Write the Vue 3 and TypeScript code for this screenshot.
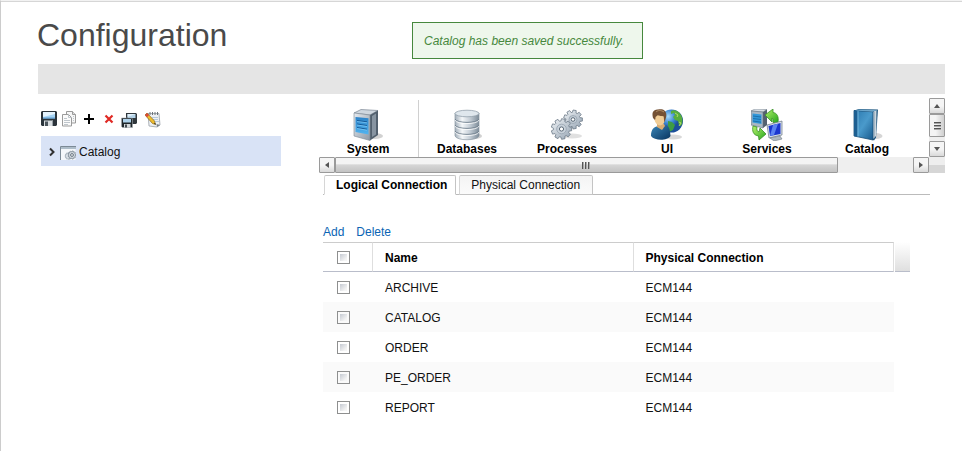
<script setup lang="ts">
import { computed, ref } from 'vue'

interface Connection {
  name: string
  physical: string
  checked: boolean
}

const sections = ['System', 'Databases', 'Processes', 'UI', 'Services', 'Catalog']
const tabs = ['Logical Connection', 'Physical Connection']
const activeTab = ref(tabs[0])

const rows = ref<Connection[]>(
  ['ARCHIVE', 'CATALOG', 'ORDER', 'PE_ORDER', 'REPORT'].map((name) => ({
    name,
    physical: 'ECM144',
    checked: false,
  })),
)

const allChecked = computed({
  get: () => rows.value.length > 0 && rows.value.every((row) => row.checked),
  set: (value: boolean) => rows.value.forEach((row) => (row.checked = value)),
})

// Nine-toothed gear outline around a centre point
function gear(cx: number, cy: number, outer: number, inner: number): string {
  const points: string[] = []
  const teeth = 9
  for (let i = 0; i < teeth; i++) {
    const base = (i / teeth) * Math.PI * 2
    const steps: [number, number][] = [
      [-0.2, inner],
      [-0.13, outer],
      [0.13, outer],
      [0.2, inner],
    ]
    for (const [offset, radius] of steps) {
      const angle = base + offset * 1.3
      points.push(`${(cx + Math.cos(angle) * radius).toFixed(2)},${(cy + Math.sin(angle) * radius).toFixed(2)}`)
    }
  }
  return points.join(' ')
}
</script>

<template>
  <div class="page">
    <header class="head">
      <h1>Configuration</h1>
      <p class="notice" role="status">Catalog has been saved successfully.</p>
    </header>
    <div class="band"></div>

    <div class="body">
      <aside class="side">
        <div class="tools">
          <button type="button" aria-label="Save">
            <svg width="16" height="18" viewBox="0 0 16 18">
              <path d="M1 1h14l1 1v13l-1 1H1l-1-1V2z" fill="#2b343b" />
              <path d="M2 2h12v6.500H2z" fill="#a5d4f5" />
              <path d="M2 2h12v2L2 7z" fill="#e4f4ff" />
              <path d="M2 7.500h12v1H2z" fill="#5c9fd4" />
              <path d="M3 10.500h9V16H3z" fill="#d9dee1" />
              <path d="M4 11.500h3V16H4z" fill="#4b555c" />
              <path d="M11 10.500h1V16h-1z" fill="#98a1a7" />
            </svg>
          </button>
          <button type="button" aria-label="Copy">
            <svg width="16" height="18" viewBox="0 0 16 18" stroke="#9b9b9b">
              <path d="M5.500 1.500h6l3 3v8.500h-9z" fill="#f6f6f6" />
              <path d="M11.500 1.500v3h3" fill="#ddd" />
              <path d="M1.500 4.500h6l3 3v8.500h-9z" fill="#fbfbfb" />
              <path d="M7.500 4.500v3h3M3 8.500h3M3 10.500h6M3 12.500h6M3 14.500h4M12 6.500h1M12 8.500h1M12 10.500h1" fill="none" stroke="#bfc6cc" />
            </svg>
          </button>
          <button type="button" aria-label="Add item">
            <svg width="16" height="18" viewBox="0 0 16 18"><path d="M7 4h2v4h4v2H9v4H7v-4H3V8h4z" fill="#000" /></svg>
          </button>
          <button type="button" aria-label="Remove item">
            <svg width="16" height="18" viewBox="0 0 16 18"><path d="M4.500 5.500l7 7M11.500 5.500l-7 7" stroke="#e02a24" stroke-width="2.200" /></svg>
          </button>
          <button type="button" aria-label="Save all">
            <svg width="16" height="18" viewBox="0 0 16 18">
              <path d="M5 3h10l1 1v9l-1 1H5z" fill="#30373c" />
              <path d="M6.500 4h8v4h-8z" fill="#b4d3e8" />
              <path d="M6.500 4h8L6.500 7z" fill="#e1f0fa" />
              <path d="M0.500 8h10l1 1v8.500H1.500l-1-1z" fill="#20272b" stroke="#a5adb2" stroke-width=".6" />
              <path d="M2 9h8v3.500H2z" fill="#aed2eb" />
              <path d="M3 14h6.500v3.500H3z" fill="#d5d9dc" />
              <path d="M4 14.500h2v3H4z" fill="#444c52" />
            </svg>
          </button>
          <button type="button" aria-label="Edit" class="edit">
            <svg width="16" height="18" viewBox="0 0 16 18">
              <path d="M3 3.500h11l1 11.500-3 2-8-1z" fill="#edf0f3" stroke="#99a1a8" stroke-width=".8" />
              <path d="M12 17l-.5-3 3.500 1z" fill="#788087" />
              <path d="M5 2v3M7.500 2v3M10 2v3M12.500 2v3" stroke="#6d747a" />
              <path d="M7 7.500h6M8 9.500h5M10 11.500h4" stroke="#b6c9db" />
              <path d="M2 3l7.500 8 1 3.500-3-1L0 5z" fill="#efbd2d" stroke="#84631b" stroke-width=".7" />
              <path d="M2 3L0 5l2 2.300 2-2.100z" fill="#dc4a3a" />
              <path d="M9 13.500l1.700 1.200-.5-2z" fill="#222" />
            </svg>
          </button>
        </div>
        <div class="tree" role="tree">
          <a href="#catalog" class="node" role="treeitem" aria-expanded="false">
            <svg class="arrow" width="8" height="10" viewBox="0 0 8 10"><path d="M2 1.500L5.500 5 2 8.500" fill="none" stroke="#303030" stroke-width="2" /></svg>
            <svg width="16" height="16" viewBox="0 0 16 16">
              <path d="M.5 2.500h15V16H.5z" fill="#f4f7fa" />
              <path d="M.5 16V2.500H16" fill="none" stroke="#7c8a96" />
              <path d="M1 3h15v2H1z" fill="#aebdc9" />
              <polygon :points="gear(8.5, 12, 3.4, 2.6)" fill="#dfe5ea" stroke="#97a3ae" stroke-width=".8" />
              <polygon :points="gear(12, 11, 4, 3.2)" fill="#d2d9df" stroke="#75828e" stroke-width=".8" />
              <circle cx="12" cy="11" r="1.400" fill="#fff" stroke="#65727e" />
            </svg>
            <span>Catalog</span>
          </a>
        </div>
      </aside>

      <main class="main">
        <div class="scroller">
          <nav class="strip" aria-label="Sections">
            <a v-for="section in sections" :key="section" :href="'#' + section.toLowerCase()" class="cell">
              <svg v-if="section === 'System'" width="32" height="32" viewBox="0 0 32 32">
                <defs>
                  <linearGradient id="steel" x2="1" y2="1"><stop stop-color="#e6ebf0" /><stop offset="1" stop-color="#8c98a5" /></linearGradient>
                  <linearGradient id="screen" x2="0" y2="1"><stop stop-color="#2b82c8" /><stop offset="1" stop-color="#51b4f0" /></linearGradient>
                </defs>
                <ellipse cx="23" cy="27" rx="8" ry="3" fill="#000" opacity=".18" />
                <path d="M2 4L9 .5l17 1L18 6z" fill="#cfd7df" stroke="#7b8794" stroke-width=".7" />
                <path d="M18 6l8-4.500V26l-8 5.500z" fill="#52606e" />
                <path d="M20 7l4-2.500v21L20 28z" fill="#8794a1" />
                <path d="M2 4l16 2v25.500L2 27z" fill="url(#steel)" stroke="#7a8692" stroke-width=".6" />
                <path d="M3.500 8l13 1.300V25.500l-13-2.500z" fill="url(#screen)" />
                <path d="M5 11.500l10 1.300M5 15l10 1.500M5 18.500l10 1.700" stroke="#155a98" />
                <path d="M5 12.500l10 1.300M5 16l10 1.500M5 19.500l10 1.700" stroke="#8bd3fb" stroke-width=".6" />
              </svg>
              <svg v-else-if="section === 'Databases'" width="32" height="32" viewBox="0 0 32 32">
                <defs><linearGradient id="drum"><stop stop-color="#a3afba" /><stop offset=".3" stop-color="#f4f7f9" /><stop offset=".6" stop-color="#c8d1d9" /><stop offset="1" stop-color="#7d8c99" /></linearGradient></defs>
                <ellipse cx="24" cy="27" rx="7" ry="3" fill="#000" opacity=".18" />
                <path d="M4 4v23c2 5 22 5 24 0V4z" fill="url(#drum)" stroke="#8b98a3" stroke-width=".7" />
                <path d="M4 10c2 4.500 22 4.500 24 0M4 16c2 4.500 22 4.500 24 0M4 22c2 4.500 22 4.500 24 0" fill="none" stroke="#70808d" stroke-width=".9" />
                <path d="M4 11.200c2 4.500 22 4.500 24 0M4 17.200c2 4.500 22 4.500 24 0M4 23.200c2 4.500 22 4.500 24 0" fill="none" stroke="#fff" stroke-width=".8" />
                <ellipse cx="16" cy="4.500" rx="12" ry="3.300" fill="#dfe7ed" stroke="#93a1ac" stroke-width=".8" />
              </svg>
              <svg v-else-if="section === 'Processes'" width="32" height="32" viewBox="0 0 32 32">
                <defs><linearGradient id="cog" x2="1" y2="1"><stop stop-color="#f0f3f6" /><stop offset="1" stop-color="#95a4b3" /></linearGradient></defs>
                <ellipse cx="21" cy="27" rx="10" ry="2.500" fill="#000" opacity=".12" />
                <polygon :points="gear(22, 10.5, 9.5, 7.2)" fill="url(#cog)" stroke="#6b7987" stroke-width=".8" />
                <circle cx="22" cy="10.500" r="4" fill="#c3cdd6" stroke="#95a2ae" stroke-width=".8" />
                <circle cx="22" cy="10.500" r="1.800" fill="#fff" stroke="#5b6977" />
                <polygon :points="gear(10.5, 20, 10.3, 8)" fill="url(#cog)" stroke="#6b7987" stroke-width=".8" />
                <circle cx="10.500" cy="20" r="4.800" fill="#c8d1da" stroke="#95a2ae" stroke-width=".8" />
                <circle cx="10.500" cy="20" r="2.100" fill="#fff" stroke="#5b6977" />
              </svg>
              <svg v-else-if="section === 'UI'" width="32" height="32" viewBox="0 0 32 32">
                <defs>
                  <radialGradient id="ocean" cx=".35" cy=".3"><stop stop-color="#a9dcfa" /><stop offset=".6" stop-color="#3b86d3" /><stop offset="1" stop-color="#1b4f9a" /></radialGradient>
                  <linearGradient id="shirt" x2="1" y2="1"><stop stop-color="#3a86b8" /><stop offset="1" stop-color="#08345f" /></linearGradient>
                </defs>
                <ellipse cx="22" cy="28" rx="9" ry="2.500" fill="#000" opacity=".15" />
                <circle cx="20.500" cy="12" r="11.500" fill="url(#ocean)" />
                <path d="M20 2c3-2 8 0 10 4 2 3 2 8 0 11l-2-1-1-4-3-1-2-3 2-2-1-2-3 1z" fill="#57ad3e" />
                <path d="M17 12l4 1 3 3-2 5-4 2-1-5z" fill="#3e9c43" />
                <path d="M24 4l3 2-1 2M28 13l2 1-2 3" fill="none" stroke="#b0d96a" />
                <path d="M0 27c0-7 3-9 7-10l5 3 3-4c3 1 4 4 4.500 11-3 5-16 5-19.500 0z" fill="url(#shirt)" />
                <path d="M6 14l7 1 1 2-3 4-5-3z" fill="#d9ac72" />
                <path d="M3 5c0-5 11-5 11 1l-.5 6c-.7 6-8.500 6-10-1z" fill="#f1cd96" />
                <path d="M2 9C0 2 4 .5 7 .5c6-1 9.500 2 8 8l-1.500 5-1-6-6-1L4 11z" fill="#755134" />
                <path d="M4.500 8l2-1.500 6 1L12 13c-1.500 4-6 3.500-7.500-1z" fill="#f1cd96" />
                <path d="M5 3c2-2 5-2 8 0" fill="none" stroke="#b39068" />
              </svg>
              <svg v-else-if="section === 'Services'" width="32" height="32" viewBox="0 0 32 32">
                <defs><linearGradient id="lime" x2="1" y2="1"><stop stop-color="#b7f36d" /><stop offset="1" stop-color="#25a51c" /></linearGradient></defs>
                <path d="M0 2l4-2 12 .5L12 3z" fill="#d6dde3" stroke="#7d8995" stroke-width=".6" />
                <path d="M12 3l4-2.500V16l-4 3z" fill="#536170" />
                <path d="M0 2l12 1v16L0 16z" fill="#a9b7c3" stroke="#657382" stroke-width=".6" />
                <path d="M1.500 4.500l9 1V15l-9-1.500z" fill="#3298da" />
                <path d="M2 7l8 1M2 9.500l8 1M2 12l8 1.200" stroke="#116099" stroke-width=".7" />
                <path d="M14 6l8-6v3.500c4 .5 6 4 5 10h-5c0-3 0-4-1-4.500V13z" fill="url(#lime)" stroke="#389127" stroke-width=".8" />
                <path d="M2 17l4 1c-.5 3 0 4 2 5l1-4 6 6-7 6-.5-4C2 26 1 22 2 17z" fill="url(#lime)" stroke="#389127" stroke-width=".8" />
                <path d="M16 16l15-4v14l-13 3z" fill="#d8dfe6" stroke="#687684" stroke-width=".7" />
                <path d="M17.500 17l12-3v11l-10.500 2z" fill="#1b36cf" />
                <path d="M22 16l5-1.200L23 26l-4 .7z" fill="#5b82f2" />
                <path d="M19 29l10-2 2 3-8 2z" fill="#aeb8c1" stroke="#6f7b86" stroke-width=".6" />
              </svg>
              <svg v-else width="32" height="32" viewBox="0 0 32 32">
                <defs><linearGradient id="cover" x2="1" y2="1"><stop stop-color="#2a78ae" /><stop offset=".5" stop-color="#4a9acb" /><stop offset="1" stop-color="#17598c" /></linearGradient></defs>
                <ellipse cx="25" cy="27" rx="6.500" ry="3" fill="#000" opacity=".16" />
                <path d="M3 1.500L8 0l19 .5-2 28-2 3-2-1z" fill="#20577f" />
                <path d="M22 3l3.500-2-.5 26-3 3z" fill="#c9d6df" />
                <path d="M23.500 3v25" stroke="#8598a6" stroke-width=".5" />
                <path d="M3 1.500l19 1.300V31L3 27z" fill="url(#cover)" stroke="#174d75" stroke-width=".8" />
                <path d="M3 1.500l3.500.3v26L3 27z" fill="#1d5f91" />
                <path d="M7 2v25.500" stroke="#82c0e2" stroke-width=".8" />
                <path d="M4 1.500L8 .5l18 .6-4.500 1.700z" fill="#6ca5c9" />
              </svg>
              <span>{{ section }}</span>
            </a>
          </nav>
          <div class="vbar">
            <button type="button" aria-label="Scroll up"><svg width="6" height="6" viewBox="0 0 6 6"><path d="M3 1l3 4H0z" fill="#555" /></svg></button>
            <div class="vthumb"><i></i><i></i><i></i></div>
            <button type="button" aria-label="Scroll down" class="last"><svg width="6" height="6" viewBox="0 0 6 6"><path d="M3 5l3-4H0z" fill="#555" /></svg></button>
          </div>
          <div class="hbar">
            <button type="button" aria-label="Scroll left"><svg width="6" height="6" viewBox="0 0 6 6"><path d="M1 3l4-3v6z" fill="#555" /></svg></button>
            <div class="htrack"><div class="hthumb"><i></i><i></i><i></i></div></div>
            <button type="button" aria-label="Scroll right"><svg width="6" height="6" viewBox="0 0 6 6"><path d="M5 3L1 0v6z" fill="#555" /></svg></button>
          </div>
          <div class="corner"></div>
        </div>

        <div class="tabs" role="tablist">
          <button
            v-for="tab in tabs"
            :key="tab"
            type="button"
            role="tab"
            class="tab"
            :class="{ active: tab === activeTab }"
            :aria-selected="tab === activeTab"
            @click="activeTab = tab"
          >{{ tab }}</button>
        </div>

        <section class="panel">
          <div class="links">
            <a href="#add">Add</a>
            <a href="#delete">Delete</a>
          </div>
          <div class="listing">
            <table>
              <thead>
                <tr>
                  <th class="pick"><input v-model="allChecked" type="checkbox" aria-label="Select all" /></th>
                  <th scope="col">Name</th>
                  <th scope="col">Physical Connection</th>
                </tr>
              </thead>
              <tbody>
                <tr v-for="row in rows" :key="row.name">
                  <td class="pick"><input v-model="row.checked" type="checkbox" :aria-label="row.name" /></td>
                  <td>{{ row.name }}</td>
                  <td>{{ row.physical }}</td>
                </tr>
              </tbody>
            </table>
            <div class="filler"></div>
          </div>
        </section>
      </main>
    </div>
  </div>
</template>

<style>
body {
  background: #fff;
}
</style>

<style scoped>
* {
  box-sizing: border-box;
}
.page {
  min-height: 100vh;
  padding: 0 17px 24px 36px;
  border-top: 1px solid #f2f2f2;
  border-left: 1px solid #ccc;
  box-shadow: inset 0 1px #d6d6d6;
  font-family: "Liberation Sans", Arial, sans-serif;
  font-size: 12px;
  line-height: 16px;
  color: #111;
}
button {
  padding: 0;
  border: 0;
  background: none;
  font: inherit;
  color: inherit;
}
svg {
  display: block;
  flex: none;
}
.head {
  display: grid;
  grid-template-columns: 375px auto;
  justify-content: start;
  align-items: start;
  height: 63px;
  padding-top: 16px;
}
h1 {
  margin: 0;
  font-size: 32px;
  line-height: 36px;
  font-weight: 400;
  color: #4a4a4a;
}
.notice {
  margin: 5px 0 0;
  padding: 10px 18px 9px 11px;
  border: 1px solid #46883d;
  background: #eef7ec;
  color: #46883d;
  font-style: italic;
}
.band {
  height: 30px;
  margin-left: 1px;
  background: #e5e5e5;
}
.body {
  display: grid;
  grid-template-columns: 240px minmax(0, 1fr);
  gap: 37px;
  padding-left: 4px;
}
.tools {
  display: flex;
  align-items: flex-start;
  gap: 4px;
  height: 42px;
  padding-top: 16px;
}
.edit {
  margin-left: 4px;
}
.node {
  display: flex;
  align-items: center;
  height: 30px;
  padding: 1px 7px 0;
  background: #d9e3f6;
  color: #111;
  text-decoration: none;
}
.arrow {
  margin-right: 4px;
}
.node span {
  margin-left: 3px;
}
.main {
  padding-top: 4px;
}
.scroller {
  display: grid;
  grid-template-columns: minmax(0, 1fr) 16px;
}
.strip {
  display: flex;
  overflow: hidden;
  padding-top: 2px;
}
.cell {
  flex: 0 0 100px;
  display: flex;
  flex-direction: column;
  align-items: center;
  padding-top: 9px;
  color: #000;
  font-weight: 700;
  text-decoration: none;
}
.cell:first-child {
  margin-right: -1px;
  box-shadow: 1px 0 #d0d0d0;
}
.vbar {
  display: flex;
  flex-direction: column;
  background: #efefef;
}
.vbar button,
.hbar button,
.vthumb,
.hthumb {
  display: flex;
  align-items: center;
  justify-content: center;
  border: 1px solid #9a9a9a;
  border-radius: 1px;
}
.vbar button,
.hbar button {
  flex: none;
  width: 16px;
  height: 16px;
  background: linear-gradient(#f5f5f5 50%, #d9d9d9);
}
.vbar .last {
  margin-top: auto;
}
.vthumb {
  flex-direction: column;
  gap: 1px;
  height: 23px;
  background: linear-gradient(90deg, #f4f4f4 40%, #cfcfcf);
}
.vthumb i {
  width: 7px;
  height: 2px;
  border-top: 1px solid #555;
  background: #a8a8a8;
}
.hbar {
  display: flex;
  margin-left: 1px;
  background: #efefef;
}
.htrack {
  flex: 1;
}
.hthumb {
  width: 87%;
  height: 16px;
  gap: 1px;
  background: linear-gradient(#f4f4f4 40%, #d6d6d6 50%, #c3c3c3);
}
.hthumb i {
  width: 2px;
  height: 7px;
  border-left: 1px solid #555;
  background: #a8a8a8;
}
.corner {
  background: linear-gradient(#eee 50%, #d6d6d6 50%);
}
.tabs {
  display: flex;
  gap: 3px;
  margin: 2px 15px 0 5px;
  padding-left: 1px;
  box-shadow: inset 0 -1px #bbb;
}
.tab {
  height: 20px;
  padding: 0 12px 0 11px;
  border: 1px solid #c4c4c4;
  border-left-color: #d6d6d6;
  border-radius: 2px 2px 0 0;
  background: linear-gradient(#f4f4f4, #fbfbfb);
}
.tab.active {
  padding-right: 8px;
  border-bottom-color: #fff;
  background: #fff;
  color: #000;
  font-weight: 700;
}
.panel {
  margin-right: 35px;
  padding: 29px 0 0 5px;
}
.links {
  display: flex;
  gap: 12px;
  margin-bottom: 2px;
}
.links a {
  color: #0b64b4;
  text-decoration: none;
}
.listing {
  display: grid;
  grid-template-columns: minmax(0, 1fr) 15px;
  gap: 1px;
}
table {
  width: 100%;
  table-layout: fixed;
  border-collapse: separate;
  border-spacing: 0;
}
th,
td {
  height: 30px;
  padding: 2px 12px 0;
  text-align: left;
}
th {
  border: 1px solid #ccc;
  border-width: 1px 1px 1px 0;
  border-right-color: #dedede;
  border-bottom-color: #b9bdca;
  color: #000;
}
.pick {
  width: 50px;
  padding: 0 14px;
}
tbody tr:nth-child(even) {
  background: #fafafa;
}
input {
  display: block;
  appearance: none;
  width: 13px;
  height: 13px;
  margin: 0;
  border: 1px solid #8e8f8f;
  background: linear-gradient(135deg, #c5cad2, #f5f5f5 80%) content-box #f4f4f4;
  padding: 2px;
}
input:checked {
  background: #4a6a94 content-box #f4f4f4;
}
.filler {
  height: 30px;
  border-bottom: 1px solid #b9bdca;
  background: linear-gradient(#fff, #dfdfdf);
}
</style>
